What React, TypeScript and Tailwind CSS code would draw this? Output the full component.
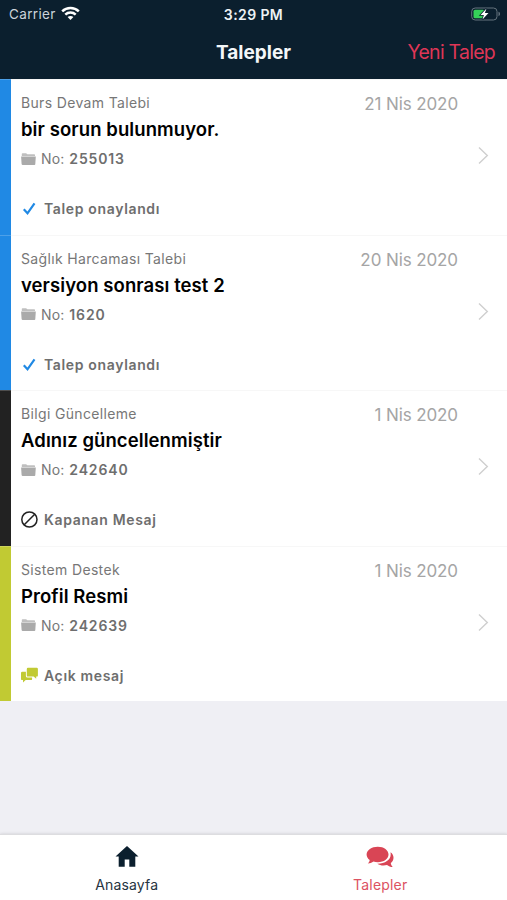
type Status = "approved" | "closed" | "open";

interface Request {
  category: string;
  title: string;
  no: string;
  date: string;
  status: Status;
}

const requests: Request[] = [
  { category: "Burs Devam Talebi", title: "bir sorun bulunmuyor.", no: "255013", date: "21 Nis 2020", status: "approved" },
  { category: "Sağlık Harcaması Talebi", title: "versiyon sonrası test 2", no: "1620", date: "20 Nis 2020", status: "approved" },
  { category: "Bilgi Güncelleme", title: "Adınız güncellenmiştir", no: "242640", date: "1 Nis 2020", status: "closed" },
  { category: "Sistem Destek", title: "Profil Resmi", no: "242639", date: "1 Nis 2020", status: "open" },
];

const statusLabel = {
  approved: "Talep onaylandı",
  closed: "Kapanan Mesaj",
  open: "Açık mesaj",
};

const stripeColor = {
  approved: "bg-[#2089e4]",
  closed: "bg-[#222222]",
  open: "bg-[#c1ca33]",
};

const StatusIcon = ({ status }: { status: Status }) => {
  if (status === "approved") {
    return (
      <svg className="w-[17px] h-[18px]" viewBox="0 0 17 18" fill="none">
        <path d="M2.8 9.3 6.5 13.3 13.5 3.3" stroke="#2089e4" strokeWidth="2.2" />
      </svg>
    );
  }
  if (status === "closed") {
    return (
      <svg className="w-[17px] h-[18px]" viewBox="0 0 17 18" fill="none" stroke="#222" strokeWidth="1.5">
        <circle cx="8.4" cy="8.5" r="7.6" />
        <path d="M3.2 13.8 13.7 3.3" />
      </svg>
    );
  }
  return (
    <svg className="w-[17px] h-[18px]" viewBox="0 0 17 18" fill="#c1ca33">
      <path d="M7 .7h8.7a1.2 1.2 0 0 1 1.2 1.2v6.5a1.2 1.2 0 0 1-1.2 1.2h-.5v2.2L12.6 9.6H7a1.2 1.2 0 0 1-1.2-1.2V1.9A1.2 1.2 0 0 1 7 .7Z" />
      <path d="M4.9 4.8H1.2A1.2 1.2 0 0 0 0 6v5.9a1.2 1.2 0 0 0 1.2 1.2H2v2.3l2.7-2.3h5.2a1.2 1.2 0 0 0 1.2-1.2v-1.3H6.6a1.7 1.7 0 0 1-1.7-1.7Z" />
    </svg>
  );
};

const FolderIcon = () => (
  <svg className="w-[15px] h-[13px]" viewBox="0 0 15 13" fill="#aaaaaa">
    <path d="M.8 3V1.300c0-.6.4-1 1-1h3.300l1.300 1h6.600c.6 0 1 .4 1 1V3Z" opacity=".75" />
    <path d="M.1 3.500h14.700l-.5 7.500c0 .6-.5 1-1.100 1H1.700c-.6 0-1-.4-1.100-1Z" />
  </svg>
);

const StatusBar = () => (
  <div className="h-[27px] pl-[9px] pr-[6px] flex items-center text-[13px] text-[#eef2f5]">
    <div className="flex-1 flex items-center gap-[5px]">
      <span className="pt-0.5 text-[13.5px] text-[#cbd3da] tracking-[0.35px]">Carrier</span>
      <svg className="w-[19px] h-[15px]" viewBox="0 0 19 15" fill="none" stroke="#fff" strokeWidth="2.5">
        <path d="M1.2 5.4C5.8.9 13.2.9 17.8 5.4" />
        <path d="M4.3 8.7c2.9-2.8 7.5-2.8 10.4 0" />
        <path d="M6.6 11.1c1.7-1.5 4.1-1.5 5.8 0L9.5 14Z" fill="#fff" stroke="none" />
      </svg>
    </div>
    <div className="pt-0.5 mr-[3px] text-center text-[14px] font-semibold tracking-[0.4px]">3:29 PM</div>
    <div className="flex-1 flex justify-end">
      <svg className="w-[31px] h-[16px]" viewBox="0 0 31 16">
        <rect x="1.7" y="2" width="25.3" height="12" rx="3.5" fill="none" stroke="#66747e" />
        <path d="M28.5 5.8c2 .5 2 3.9 0 4.4Z" fill="#66747e" />
        <rect x="3.5" y="3.8" width="11" height="8.4" rx="1.5" fill="#35d158" />
        <path d="M16.5 2.5 10.5 9h3.4L12.5 13.6l6-6.6h-3.6Z" fill="#fff" stroke="#0b1f2e" strokeWidth="1.5" paintOrder="stroke" />
      </svg>
    </div>
  </div>
);

const RequestRow = ({ item }: { item: Request }) => (
  <li className="h-[155.5px] flex bg-white">
    <div className={`w-[11px] shrink-0 ${stripeColor[item.status]} border-t border-white/20`} />
    <div className="flex-1 flex border-t border-[#f7f7f7]">
      <div className="flex-1 pl-[10px] pt-[13px] text-[#777]">
        <p className="text-[14px] leading-5 tracking-[0.34px]">{item.category}</p>
        <h2 className="mt-[2px] text-[18.5px] leading-7 font-semibold text-black tracking-[0.08px]">{item.title}</h2>
        <p className="mt-[6px] flex items-center text-[14px] leading-5 tracking-[0.1px]">
          <FolderIcon />
          <span className="ml-[5px]">
            No: <b className="ml-px font-semibold text-[#6e6e6e] tracking-[0.85px]">{item.no}</b>
          </span>
        </p>
        <p className="mt-[30px] flex items-center gap-[6px] text-[14px] leading-5 font-semibold text-[#6e6e6e] tracking-[0.65px]">
          <StatusIcon status={item.status} />
          {statusLabel[item.status]}
        </p>
      </div>
      <time className="pt-[14px] text-[17px] leading-5 text-[#a5a5a5] tracking-[-0.1px]">{item.date}</time>
      <svg className="mt-[66px] ml-[20px] mr-[18px] w-[11px] h-[19px]" viewBox="0 0 11 19" fill="none">
        <path d="M1 1.5 9.3 9.5 1 17.5" stroke="#cfcfcf" strokeWidth="1.4" />
      </svg>
    </div>
  </li>
);

export default function App() {
  return (
    <div className="w-full h-[900px] flex flex-col bg-[#efeff4] overflow-hidden font-['Inter','Liberation_Sans',sans-serif]">
      <header className="h-[79px] shrink-0 bg-[#0b1f2e]">
        <StatusBar />
        <div className="h-[52px] px-3 grid grid-cols-3 items-center">
          <h1 className="col-start-2 text-center text-[19px] font-bold text-[#f4f7f9]">Talepler</h1>
          <button className="justify-self-end whitespace-nowrap text-[19.5px] tracking-[-0.75px] text-[#df3656]">Yeni Talep</button>
        </div>
      </header>

      <ul className="flex-1">
        {requests.map((item) => (
          <RequestRow key={item.no} item={item} />
        ))}
      </ul>

      <nav className="h-[66px] shrink-0 grid grid-cols-2 bg-white border-t border-[#dddde0] shadow-[0_0_3px_rgba(0,0,0,0.15)] text-[14px]">
        <a className="flex flex-col items-center text-[#26343f]">
          <svg className="mt-[10px] w-[24px] h-[22px]" viewBox="0 0 24 22" fill="#0b1f2e">
            <path d="M12 .9 23.5 11.5H20.3V21.7H14.3V14.5H9.700v7.200H3.700V11.500H.5Z" />
          </svg>
          <span className="mt-[8px] leading-5 tracking-[0.15px]">Anasayfa</span>
        </a>
        <a className="flex flex-col items-center text-[#dc5262]">
          <svg className="mt-[11px] w-[28px] h-[22px]" viewBox="0 0 28 22" fill="#d94555">
            <path d="M11.8.8C18 .8 22.500 4.200 22.500 8.500s-4.500 7.700-10.700 7.700c-1.600 0-3-.2-4.300-.6-1.700 1.300-3.600 2-5.700 2 1-1 1.800-2.100 1.900-3.500C1.800 12.700.6 10.700.6 8.500.6 4.200 5.600.8 11.800.8Z" />
            <path d="M24.500 6.300c2 1.300 3 3.300 3 5.500 0 2.100-1 4-2.700 5.300.2 1.600.9 2.900 2 4-2.300 0-4.200-.8-5.800-2.100-3.600.9-7.100.4-9.700-1.300 7.600.1 13.400-3.700 13.400-9.100 0-.8-.1-1.600-.2-2.300Z" />
          </svg>
          <span className="mt-[7px] leading-5 tracking-[0.2px]">Talepler</span>
        </a>
      </nav>
    </div>
  );
}
